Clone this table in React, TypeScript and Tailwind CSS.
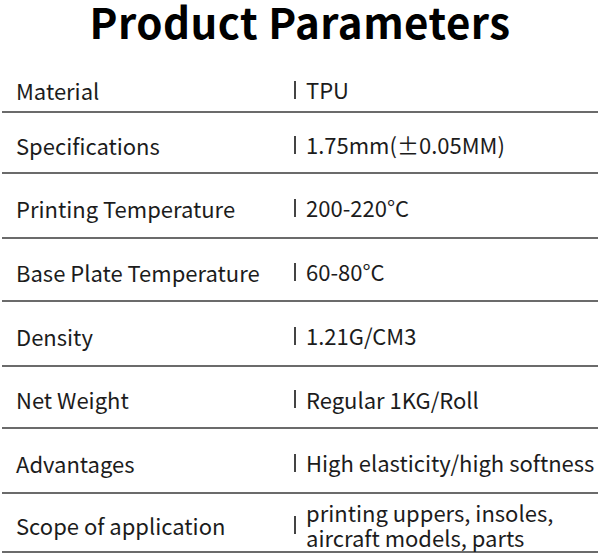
import React from 'react';

type Param = { label: string; value: React.ReactNode; h: string };

const params: Param[] = [
  { label: 'Material', value: 'TPU', h: 'h-[49px]' },
  { label: 'Specifications', value: '1.75mm(±0.05MM)', h: 'h-[61px]' },
  { label: 'Printing Temperature', value: '200-220°C', h: 'h-[65px]' },
  { label: 'Base Plate Temperature', value: '60-80°C', h: 'h-[63px]' },
  { label: 'Density', value: '1.21G/CM3', h: 'h-[65px]' },
  { label: 'Net Weight', value: 'Regular 1KG/Roll', h: 'h-[62px]' },
  { label: 'Advantages', value: 'High elasticity/high softness', h: 'h-[65px]' },
  {
    label: 'Scope of application',
    value: (
      <>
        printing uppers, insoles,
        <br />
        aircraft models, parts
      </>
    ),
    h: 'h-[59px]',
  },
];

const App: React.FC = () => {
  return (
    <div
      className="w-[600px] h-[557px] bg-white text-[#1c1c1c] overflow-hidden"
      style={{ fontFamily: '"Noto Sans CJK SC", "Noto Sans", sans-serif' }}
    >
      {/* Title */}
      <h1 className="h-[64px] pt-[1px] text-center text-[42px] leading-[40px] font-bold text-black tracking-[0.5px]">
        Product Parameters
      </h1>

      {/* Rows */}
      <div className="px-[2px]">
        {params.map((p) => (
          <div key={p.label} className={`flex items-center border-b-2 border-[#6b6b6b] ${p.h}`}>
            <div className="w-[292px] pl-[14px] pt-[4px] text-[22px] leading-none">{p.label}</div>
            <div className="flex items-center gap-[10px] pt-[4px]">
              <span className="w-[2px] h-[18px] bg-[#444]" />
              <span className="text-[22px] leading-[25px]">{p.value}</span>
            </div>
          </div>
        ))}
      </div>
    </div>
  );
};

export default App;
